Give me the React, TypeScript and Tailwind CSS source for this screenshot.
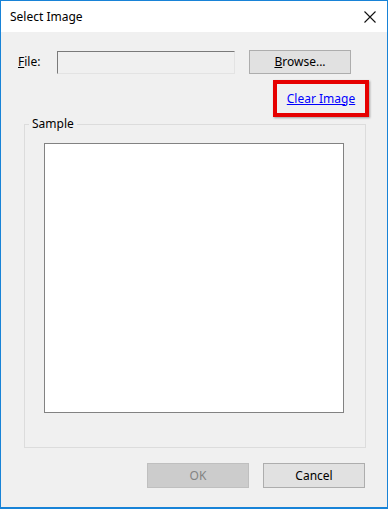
import React from "react";

export default function App() {
  const font = { fontFamily: '"Segoe UI", "Noto Sans", "Open Sans", sans-serif' };
  return (
    <div
      className="w-[388px] h-[509px] border border-[#1883d7] border-b-2 bg-[#f0f0f0] flex flex-col text-[12px] text-black overflow-hidden"
      style={font}
    >
      <div className="h-[31px] bg-white flex items-center justify-between pl-[9px] pr-[9px] pt-[1px] shrink-0">
        <span className="text-[12px] leading-none">Select Image</span>
        <svg width="14" height="14" viewBox="0 0 14 14" className="mr-[1px]">
          <path d="M1.5 1.5 L12.5 12.5 M12.5 1.5 L1.5 12.5" stroke="#111" strokeWidth="1.1" fill="none" />
        </svg>
      </div>
      <div className="flex flex-col flex-1">
        <div className="flex items-center mt-[18px] h-[24px]">
          <span className="ml-[17px] w-[39px]">
            <span className="underline">F</span>ile:
          </span>
          <div className="w-[178px] h-[23px] mt-[1px] border border-t-[#7a7a7a] border-l-[#7a7a7a] border-r-[#e3e3e3] border-b-[#e3e3e3] bg-[#f0f0f0]" />
          <button className="ml-[14px] w-[102px] h-[24px] bg-[#e1e1e1] border border-[#adadad] flex items-center justify-center">
            <span>
              <span className="underline">B</span>rowse...
            </span>
          </button>
        </div>
        <div className="flex justify-end mt-[6px] mr-[18px]">
          <div className="w-[96px] h-[37px] border-[4px] border-[#e60000] flex items-center justify-center shadow-[1px_1px_2px_rgba(0,0,0,0.35)]">
            <a className="text-[#0000ff] underline cursor-pointer text-[12px]">Clear Image</a>
          </div>
        </div>
        <fieldset className="ml-[23px] w-[342px] h-[332px] -mt-[1px] border border-[#dcdcdc] rounded-none p-0">
          <legend className="ml-[4px] px-[3px] leading-[16px]">Sample</legend>
          <div className="ml-[19px] mt-[11px] w-[300px] h-[270px] bg-white border border-[#828282]" />
        </fieldset>
        <div className="flex justify-end gap-[14px] mr-[22px] mt-[15px]">
          <button className="w-[102px] h-[25px] bg-[#cccccc] border border-[#bfbfbf] text-[#838383] flex items-center justify-center">
            OK
          </button>
          <button className="w-[102px] h-[25px] bg-[#e1e1e1] border border-[#adadad] flex items-center justify-center">
            Cancel
          </button>
        </div>
      </div>
    </div>
  );
}
